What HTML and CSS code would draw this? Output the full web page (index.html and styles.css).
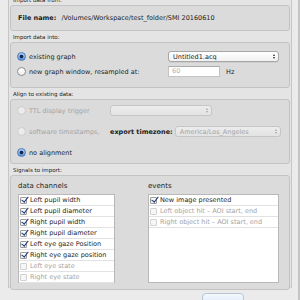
FILE: index.html
```html
<!DOCTYPE html>
<html lang="en">
<head>
    <meta charset="UTF-8">
    <title>Import Eye Tracking Data</title>
    <link rel="stylesheet" href="styles.css">
</head>
<body>

    <div class="frame">
        <div class="group-title first">Import data from:</div>
        <div class="group file-group">
            <span class="strong">File name:</span>
            <span>/Volumes/Workspace/test_folder/SMI 20160610</span>
        </div>

        <div class="group-title">Import data into:</div>
        <div class="group into-group">
            <div class="row">
                <div class="choice wide"><span class="radio on"></span>existing graph</div>
                <div class="select graph-select">Untitled1.acq<span class="arrows"></span></div>
            </div>
            <div class="row">
                <div class="choice wide"><span class="radio"></span>new graph window, resampled at:</div>
                <div class="field">60</div>
                <span class="unit">Hz</span>
            </div>
        </div>

        <div class="group-title">Align to existing data:</div>
        <div class="group align-group">
            <div class="row">
                <div class="choice narrow disabled"><span class="radio off"></span>TTL display trigger</div>
                <div class="select disabled trigger-select"><span class="arrows"></span></div>
            </div>
            <div class="row">
                <div class="choice narrow disabled"><span class="radio off"></span>software timestamps,</div>
                <span class="strong tz-label">export timezone:</span>
                <div class="select disabled tz-select">America/Los_Angeles<span class="arrows"></span></div>
            </div>
            <div class="row">
                <div class="choice"><span class="radio on"></span>no alignment</div>
            </div>
        </div>

        <div class="group-title">Signals to import:</div>
        <div class="group signals-group">
            <div class="column">
                <div class="column-head">data channels</div>
                <ul class="list">
                    <li><span class="box checked"></span>Left pupil width</li>
                    <li><span class="box checked"></span>Left pupil diameter</li>
                    <li><span class="box checked"></span>Right pupil width</li>
                    <li><span class="box checked"></span>Right pupil diameter</li>
                    <li><span class="box checked"></span>Left eye gaze Position</li>
                    <li><span class="box checked"></span>Right eye gaze position</li>
                    <li class="disabled"><span class="box"></span>Left eye state</li>
                    <li class="disabled"><span class="box"></span>Right eye state</li>
                </ul>
            </div>
            <div class="column">
                <div class="column-head">events</div>
                <ul class="list">
                    <li><span class="box checked"></span>New image presented</li>
                    <li class="disabled"><span class="box"></span>Left object hit &ndash; AOI start, end</li>
                    <li class="disabled"><span class="box"></span>Right object hit &ndash; AOI start, end</li>
                </ul>
            </div>
        </div>
    </div>

    <div class="ok-button"></div>

</body>
</html>
```

FILE: styles.css
```css
body {
    margin: 0;
    height: 300px;
    overflow: hidden;
    box-sizing: border-box;
    border-right: 2px solid #c4c4c4;
    background-color: #ebebeb;
    font-family: "DejaVu Sans", sans-serif;
    font-size: 6.5px;
    color: #1c1c1c;
}

.frame {
    margin-left: 8px;
    width: 284px;
    height: 291px;
    box-sizing: border-box;
    padding: 0 1px;
    border-left: 1px solid #c6c6c6;
    border-right: 1px solid #c6c6c6;
    border-bottom: 1px solid #d0d0d0;
    background-color: #e4e4e4;
}

.group-title {
    margin: 3px 0 1px;
    padding-left: 3px;
    font-size: 5.5px;
    line-height: 7px;
    color: #202020;
}

.group-title.first {
    margin-top: -3px;
}

.group {
    box-sizing: border-box;
    border: 1px solid #c3c3c3;
    border-radius: 3px;
    background-color: #dbdbdb;
}

.strong {
    font-weight: bold;
}

/* file name */
.file-group {
    height: 26px;
    display: flex;
    align-items: center;
    gap: 5px;
    padding-left: 7px;
}

/* radio rows */
.row {
    display: flex;
    align-items: center;
    height: 11px;
}

.into-group {
    height: 46px;
    padding: 8px 0 0 6px;
}

.into-group .row {
    margin-bottom: 4px;
}

.align-group {
    height: 65px;
    padding: 5px 0 0 6px;
}

.align-group .row {
    margin-bottom: 10px;
}

.choice {
    display: flex;
    align-items: center;
    white-space: nowrap;
}

.choice.wide {
    width: 151px;
}

.choice.narrow {
    width: 93px;
}

.disabled {
    color: #a3a3a3;
}

.radio {
    width: 9px;
    height: 9px;
    margin-right: 3px;
    box-sizing: border-box;
    border: 1px solid #8e8e8e;
    border-radius: 50%;
    background: linear-gradient(#ffffff, #ededed);
}

.radio.on {
    border-color: #4a78b6;
    background: radial-gradient(circle, #17284c 0 1.5px, transparent 2.2px),
                linear-gradient(#b4d3f5, #5592df);
}

.radio.off {
    border-color: #cbcbcb;
    background: #ebebeb;
}

/* popup menus */
.select {
    display: flex;
    align-items: center;
    justify-content: space-between;
    height: 11px;
    box-sizing: border-box;
    padding: 0 3px 0 4px;
    border: 1px solid #a6a6a6;
    border-radius: 3px;
    background: linear-gradient(#ffffff, #f1f1f1);
    box-shadow: 0 1px 0 rgba(0, 0, 0, 0.06);
    white-space: nowrap;
}

.select.disabled {
    border-color: #c6c6c6;
    background: linear-gradient(#ececec, #e3e3e3);
    box-shadow: none;
}

.graph-select {
    width: 111px;
}

.trigger-select {
    width: 102px;
    justify-content: flex-end;
}

.tz-label {
    flex-shrink: 0;
    margin-right: 2px;
    white-space: nowrap;
}

.tz-select {
    width: 106px;
}

.arrows {
    display: flex;
    flex-direction: column;
    gap: 1px;
}

.arrows::before,
.arrows::after {
    content: "";
    border-left: 1.5px solid transparent;
    border-right: 1.5px solid transparent;
}

.arrows::before {
    border-bottom: 2px solid #2a2a2a;
}

.arrows::after {
    border-top: 2px solid #2a2a2a;
}

.select.disabled .arrows::before {
    border-bottom-color: #a8a8a8;
}

.select.disabled .arrows::after {
    border-top-color: #a8a8a8;
}

.field {
    width: 52px;
    height: 11px;
    box-sizing: border-box;
    padding-left: 3px;
    line-height: 9px;
    border: 1px solid #c4c4c4;
    border-top-color: #aaaaaa;
    background-color: #ffffff;
    color: #b0b0b0;
}

.unit {
    margin-left: 6px;
}

/* signal lists */
.signals-group {
    height: 115px;
    display: grid;
    grid-template-columns: 97px 131px;
    column-gap: 33px;
    align-content: start;
    padding: 6px 0 0 7px;
}

.column-head {
    margin-bottom: 4px;
    font-size: 7px;
    line-height: 8px;
    white-space: nowrap;
}

.list {
    list-style: none;
    margin: 0;
    padding: 0;
    height: 89px;
    box-sizing: border-box;
    border: 1px solid #b8b8b8;
    background-color: #ffffff;
}

.list li {
    display: flex;
    align-items: center;
    height: 11px;
    box-sizing: border-box;
    padding-left: 1px;
    border-bottom: 1px solid #e2e2e2;
    white-space: nowrap;
}

.box {
    position: relative;
    width: 7px;
    height: 7px;
    margin-right: 3px;
    box-sizing: border-box;
    border: 1px solid #9a9a9a;
    border-radius: 1px;
    background: linear-gradient(#ffffff, #eeeeee);
}

.disabled .box {
    border-color: #d2d2d2;
    background: #f6f6f6;
}

.box.checked::after {
    content: "";
    position: absolute;
    left: 1.5px;
    top: -2.5px;
    width: 2.5px;
    height: 6px;
    border-right: 1.6px solid #1f3f7d;
    border-bottom: 1.6px solid #1f3f7d;
    transform: rotate(38deg);
}

.ok-button {
    width: 40px;
    height: 12px;
    margin: 5px 0 0 202px;
    border: 1px solid #b9c6d6;
    border-radius: 4px;
    background: linear-gradient(#f4f8fd, #d9e7f7);
}
```
